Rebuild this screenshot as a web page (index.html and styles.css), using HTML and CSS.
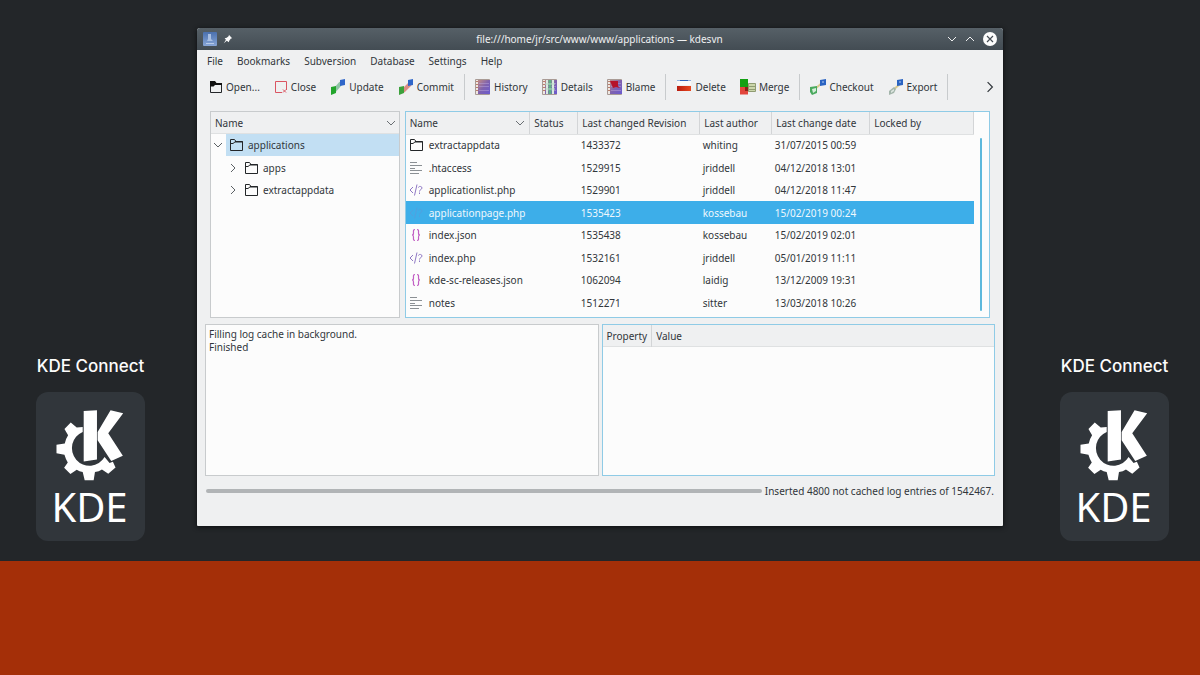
FILE: index.html
```html
<!DOCTYPE html>
<html lang="en">
<head>
<meta charset="utf-8">
<title>kdesvn</title>
<link rel="stylesheet" href="styles.css">
</head>
<body>
<svg class="sprite" aria-hidden="true">
  <defs>
    <linearGradient id="g-log" x1="0" y1="0" x2="1" y2="1"><stop offset="0" stop-color="#c08a86"/><stop offset=".5" stop-color="#7f62ae"/><stop offset="1" stop-color="#6a5ad0"/></linearGradient>
    <linearGradient id="g-red" x1="0" y1="0" x2="1" y2="0"><stop offset="0" stop-color="#b81c10"/><stop offset="1" stop-color="#e8481e"/></linearGradient>
    <linearGradient id="g-app" x1="0" y1="0" x2="0" y2="1"><stop offset="0" stop-color="#4a70ae"/><stop offset="1" stop-color="#88a6d6"/></linearGradient>
  </defs>
  <symbol id="folder" viewBox="0 0 14 14"><path d="M1.500 12.500v-11h4l1.500 2h6.500v9z" fill="none" stroke="#232629"/><path d="M1.500 5.500H4L6.500 3.500" fill="none" stroke="#232629"/><path d="M6 3h7.500v1.500H6z" fill="#232629"/></symbol>
  <symbol id="folder-open" viewBox="0 0 14 14"><path d="M1.500 12.500v-11h4l1.500 2h5.500v9z" fill="none" stroke="#232629"/><path d="M1 1h5l1.500 2H13v2H6L4.500 6.500H1z" fill="#111"/></symbol>
  <symbol id="text" viewBox="0 0 14 14"><path d="M1 1.500h7M1 4.500h12M1 7.500h5M1 9.500h12M1 12.500h9" stroke="#8b9094" fill="none"/></symbol>
  <symbol id="php" viewBox="0 0 14 14"><path d="M4 4L1 7l3 3M8 1.500L5.500 12.500M9.500 4.500c0-1.500 3.500-1.500 3.500.5 0 1.500-2.500 1.500-2.500 3.500M10.500 9.500v1.500" fill="none" stroke="#8f78c4"/></symbol>
  <symbol id="json" viewBox="0 0 14 14"><path d="M6 1.500C4 1.500 4.500 3 4.500 5S4 7 3 7c1 0 1.500 0 1.500 2S4 12.500 6 12.500M8 1.500c2 0 1.500 1.500 1.500 3.500S10 7 11 7c-1 0-1.500 0-1.500 2s.5 3.500-1.500 3.500" fill="none" stroke="#c25fc4" stroke-width="1.200"/></symbol>
  <symbol id="down" viewBox="0 0 10 10"><path d="M1 3l4 4 4-4" fill="none" stroke="currentColor"/></symbol>
  <symbol id="right" viewBox="0 0 10 10"><path d="M3 1l4 4-4 4" fill="none" stroke="currentColor"/></symbol>
  <symbol id="log" viewBox="0 0 16 16"><path d="M.5.500h14v15H.5z" fill="#eee7e2" stroke="#a99b95"/><path d="M3 1h12v14H3z" fill="url(#g-log)"/><path d="M1 2.500h2M1 5.500h2M1 8.500h2M1 11.500h2" stroke="#bb7e6c"/><path d="M4 4.500h10M4 7.500h10M4 11.500h10" stroke="#b9a4db" stroke-opacity=".5"/></symbol>
  <symbol id="kde" viewBox="104 196 204 214"><path d="M187 199l40-2v148l-40 6zM229 262l39-65 38 9-45 60 44 68-35 16-41-63zM184 247L166 249 148 234 129 253 140 272Q132 284 130 297L105 301V326L129 331Q133 345 139 354L128 370 147 389 166 376Q174 381 184 383L190 408H217L221 383Q233 381 242 375L261 388 283 369 275 352 265 356 250 338A53 53 0 1 1 184 262z" fill="#fff"/></symbol>
</svg>

<main class="stage">
  <aside class="side">
    <h2 class="side-title">KDE Connect</h2>
    <div class="card"><svg class="kde-logo" aria-hidden="true"><use href="#kde"/></svg><span class="kde-name">KDE</span></div>
  </aside>

  <section class="window">
    <header class="titlebar">
      <div class="title-side">
        <svg class="i16" viewBox="0 0 16 16"><rect x="1" y="1" width="14" height="14" rx="1" fill="url(#g-app)"/><path d="M6 3h3v5l2 2H5l1-2z" fill="#a9bfe2"/><path d="M4 12.500h8" stroke="#b9cbe8"/></svg>
        <svg class="i10" viewBox="0 0 12 12"><path d="M7 1l4 4-1.500.5L7.500 8 7 10 4.500 8 1 11 3.500 7 2 5l2.500-.5L7 2.500z" fill="#fcfcfc"/></svg>
      </div>
      <h1 class="title">file:///home/jr/src/www/www/applications — kdesvn</h1>
      <div class="title-side title-buttons">
        <button class="plain" aria-label="Minimize"><svg class="i10"><use href="#down"/></svg></button>
        <button class="plain" aria-label="Maximize"><svg class="i10 flip"><use href="#down"/></svg></button>
        <button class="plain" aria-label="Close window"><svg class="i14" viewBox="0 0 14 14"><circle cx="7" cy="7" r="7" fill="#fcfcfc"/><path d="M4 4l6 6M10 4l-6 6" stroke="#454d54" stroke-width="1.200"/></svg></button>
      </div>
    </header>

    <nav class="menubar">
      <button class="plain">File</button><button class="plain">Bookmarks</button><button class="plain">Subversion</button><button class="plain">Database</button><button class="plain">Settings</button><button class="plain">Help</button>
    </nav>

    <div class="toolbar">
      <div class="group">
        <button class="tool"><svg class="i14"><use href="#folder-open"/></svg>Open...</button>
        <button class="tool"><svg class="i14" viewBox="0 0 14 14"><path d="M8 12.500H1.500v-11h11V9M12.500 9v1" fill="none" stroke="#da5562"/><path d="M9 9.500l3 3M12 9.500l-3 3" stroke="#da5562"/></svg>Close</button>
        <button class="tool"><svg class="i16" viewBox="0 0 16 16"><path d="M4 12l7-8" stroke="#8fc4a5" stroke-width="4"/><path d="M1 8l5-1v7l-5 2z" fill="#22a52c"/><path d="M10 1l5-1v6l-5 1z" fill="#2f66c9"/></svg>Update</button>
        <button class="tool"><svg class="i16" viewBox="0 0 16 16"><path d="M5 12l7-7" stroke="#dc8d86" stroke-width="4"/><path d="M1 8l5-1v7l-5 2z" fill="#3da13c"/><path d="M10 1l5-1v6l-5 1z" fill="#2f66c9"/></svg>Commit</button>
      </div>
      <div class="group">
        <button class="tool"><svg class="i16"><use href="#log"/></svg>History</button>
        <button class="tool"><svg class="i16" viewBox="0 0 16 16"><use href="#log"/><path d="M5 1v14M11 1v14" stroke="#d9e9df" stroke-width="2"/><path d="M8 1v14" stroke="#5fae85" stroke-width="3"/><path d="M3 5h10M3 10h10" stroke="#b4ddc4"/></svg>Details</button>
        <button class="tool"><svg class="i16" viewBox="0 0 16 16"><use href="#log"/><path d="M3 2h8v5l2 2-4-1-3 1z" fill="#b5122a"/></svg>Blame</button>
      </div>
      <div class="group">
        <button class="tool"><svg class="i16" viewBox="0 0 16 16"><path d="M1 1h14v5H1z" fill="#fafafa"/><path d="M1 1h14v1H1z" fill="#8fb0de"/><path d="M4 1h8v1H4z" fill="#2f62b8"/><path d="M1 7h14v5H1z" fill="url(#g-red)"/></svg>Delete</button>
        <button class="tool"><svg class="i16" viewBox="0 0 16 16"><path d="M0 0h8v8H0z" fill="#12a012"/><path d="M0 8h8v7.500H0z" fill="#e2453c"/><path d="M5 8h3v4H5z" fill="#8b2118"/><path d="M8.500 4.500h7v8h-7z" fill="#cbd6ab" stroke="#8f9b72"/><path d="M9 7.500h6M9 10.500h6" stroke="#8f9b72"/></svg>Merge</button>
      </div>
      <div class="group">
        <button class="tool"><svg class="i16" viewBox="0 0 16 16"><path d="M6 9l6-5" stroke="#d9c98e" stroke-width="2"/><path d="M0 8l7-1v7l-5 2-2-3z" fill="#49a95e"/><path d="M2 10l4-1v3l-3 2z" fill="#d5ecd9"/><path d="M10 1l6-1v6l-6 1z" fill="#2963c2"/><path d="M12 3h2" stroke="#b6cdf0"/></svg>Checkout</button>
        <button class="tool"><svg class="i16" viewBox="0 0 16 16"><path d="M5 11l7-6" stroke="#d9c98e" stroke-width="2"/><path d="M1 12l5-4 2 2-2 4-5 2z" fill="#a3b5ab"/><path d="M3 12l3-2v2l-3 2z" fill="#dce5df"/><path d="M9 1l6-1v6l-6 1z" fill="#2963c2"/><path d="M11 3h2" stroke="#b6cdf0"/></svg>Export</button>
      </div>
      <button class="plain more" aria-label="More actions"><svg class="i12"><use href="#right"/></svg></button>
    </div>

    <div class="panes">
      <div class="pane">
        <div class="head tree-head">Name<svg class="i10 soft"><use href="#down"/></svg></div>
        <ul class="tree">
          <li class="node"><span class="twist"><svg class="i10"><use href="#down"/></svg></span><span class="node-body current"><svg class="i14"><use href="#folder"/></svg>applications</span></li>
          <li class="node child"><span class="twist"><svg class="i10"><use href="#right"/></svg></span><span class="node-body"><svg class="i14"><use href="#folder"/></svg>apps</span></li>
          <li class="node child"><span class="twist"><svg class="i10"><use href="#right"/></svg></span><span class="node-body"><svg class="i14"><use href="#folder"/></svg>extractappdata</span></li>
        </ul>
      </div>
      <div class="pane active files-pane">
        <table class="files">
          <colgroup><col class="c-name"><col class="c-status"><col class="c-rev"><col class="c-author"><col class="c-date"><col></colgroup>
          <thead><tr><th><span class="sort">Name<svg class="i10 soft"><use href="#down"/></svg></span></th><th>Status</th><th>Last changed Revision</th><th>Last author</th><th>Last change date</th><th>Locked by</th></tr></thead>
          <tbody>
            <tr><td><span class="file"><svg class="i14"><use href="#folder"/></svg>extractappdata</span></td><td></td><td>1433372</td><td>whiting</td><td>31/07/2015 00:59</td><td></td></tr>
            <tr><td><span class="file"><svg class="i14"><use href="#text"/></svg>.htaccess</span></td><td></td><td>1529915</td><td>jriddell</td><td>04/12/2018 13:01</td><td></td></tr>
            <tr><td><span class="file"><svg class="i14"><use href="#php"/></svg>applicationlist.php</span></td><td></td><td>1529901</td><td>jriddell</td><td>04/12/2018 11:47</td><td></td></tr>
            <tr class="selected"><td><span class="file"><svg class="i14 faint"><use href="#php"/></svg>applicationpage.php</span></td><td></td><td>1535423</td><td>kossebau</td><td>15/02/2019 00:24</td><td></td></tr>
            <tr><td><span class="file"><svg class="i14"><use href="#json"/></svg>index.json</span></td><td></td><td>1535438</td><td>kossebau</td><td>15/02/2019 02:01</td><td></td></tr>
            <tr><td><span class="file"><svg class="i14"><use href="#php"/></svg>index.php</span></td><td></td><td>1532161</td><td>jriddell</td><td>05/01/2019 11:11</td><td></td></tr>
            <tr><td><span class="file"><svg class="i14"><use href="#json"/></svg>kde-sc-releases.json</span></td><td></td><td>1062094</td><td>laidig</td><td>13/12/2009 19:31</td><td></td></tr>
            <tr><td><span class="file"><svg class="i14"><use href="#text"/></svg>notes</span></td><td></td><td>1512271</td><td>sitter</td><td>13/03/2018 10:26</td><td></td></tr>
          </tbody>
        </table>
        <div class="scroll"><div class="thumb"></div></div>
      </div>
    </div>

    <div class="lower">
      <div class="pane log">Filling log cache in background.<br>Finished</div>
      <div class="pane active">
        <div class="head props"><span class="prop">Property</span><span class="prop">Value</span></div>
      </div>
    </div>

    <footer class="status">
      <div class="bar" role="progressbar" aria-label="Log cache progress"></div>
      <span>Inserted 4800 not cached log entries of 1542467.</span>
    </footer>
  </section>

  <aside class="side">
    <h2 class="side-title">KDE Connect</h2>
    <div class="card"><svg class="kde-logo" aria-hidden="true"><use href="#kde"/></svg><span class="kde-name">KDE</span></div>
  </aside>
</main>
<div class="band"></div>
</body>
</html>
```
FILE: styles.css
```css
* { box-sizing: border-box; }

body {
  margin: 0;
  min-height: 100vh;
  display: flex;
  flex-direction: column;
  background: #232629;
  color: #31363b;
  font: 10px/14px "Noto Sans", sans-serif;
}

svg { display: block; flex: none; }
.sprite { position: absolute; width: 0; height: 0; }
.i10 { width: 10px; height: 10px; }
.i12 { width: 12px; height: 12px; }
.i14 { width: 14px; height: 14px; }
.i16 { width: 16px; height: 16px; }
.flip { transform: rotate(180deg); }
.faint { opacity: .25; }
.soft { color: #6a6f73; }

button {
  border: 0;
  padding: 0;
  background: none;
  color: inherit;
  font: inherit;
}

.stage {
  display: flex;
  align-items: flex-end;
  padding: 28px 31px 20px 36px;
}

.band { flex: 1; min-height: 64px; background: #a42f08; }

/* Side cards */
.side { flex: none; width: 109px; }
.side-title {
  margin: 0 0 16px;
  color: #fcfcfc;
  font: 500 17px/20px Inter, sans-serif;
  white-space: nowrap;
  text-align: center;
}
.card {
  display: flex;
  flex-direction: column;
  align-items: center;
  padding: 18px 2px 12px 0;
  border-radius: 12px;
  background: #31363b;
}
.kde-logo { width: 68px; height: 71px; }
.kde-name {
  margin-top: 3px;
  color: #fff;
  font-size: 40px;
  line-height: 45px;
}

/* Window */
.window {
  flex: 1;
  min-width: 0;
  margin: 0 57px 15px 52px;
  padding-bottom: 28px;
  border-radius: 3px 3px 1px 1px;
  background: #eff0f1;
  box-shadow: 0 1px 5px #0b0d0f;
}
.titlebar {
  display: flex;
  align-items: center;
  height: 22px;
  padding: 0 6px 0 5px;
  border-radius: 3px 3px 0 0;
  background: linear-gradient(#566067, #434c53);
  color: #eff0f1;
}
.title-side { display: flex; flex: 1; align-items: center; gap: 5px; }
.title-buttons { justify-content: flex-end; gap: 8px; }
.title { margin: 0; font: inherit; }

.menubar { display: flex; gap: 14px; padding: 4px 10px 5px; }

.toolbar { display: flex; align-items: center; height: 28px; padding-left: 12px; }
.group {
  display: flex;
  align-items: center;
  gap: 14px;
  height: 26px;
  margin-right: 10px;
  padding-right: 10px;
  border-right: 1px solid #c8cbcd;
}
.tool { display: flex; align-items: center; gap: 3px; white-space: nowrap; }
.more { margin-left: auto; padding-right: 7px; }

.panes {
  display: grid;
  grid-template-columns: 190fr 586fr;
  gap: 5px;
  padding: 10px 13px 6px;
}
.lower {
  display: grid;
  grid-template-columns: 1fr 1fr;
  gap: 3px;
  min-height: 152px;
  padding: 0 8px;
}
.pane { border: 1px solid #c8cbcd; background: #fcfcfc; }
.active { border-color: #8fcbe6; }
.head {
  display: flex;
  align-items: center;
  height: 22px;
  border-bottom: 1px solid #dfe1e2;
  background: #eff0f1;
}
.tree-head { justify-content: space-between; padding: 0 3px 0 4px; }

.tree { margin: 0; padding: 0; list-style: none; }
.node { display: flex; height: 22px; }
.node:nth-child(even) { height: 23px; }
.child { padding-left: 15px; }
.twist { display: flex; align-items: center; width: 15px; padding-left: 2px; color: #5c6165; }
.node-body { display: flex; flex: 1; align-items: center; gap: 5px; padding-left: 3px; }
.current { background: #c2dff3; }

.files-pane { display: flex; padding-bottom: 3px; }
.files { flex: 1; border-collapse: collapse; table-layout: fixed; }
.c-name { width: 124px; }
.c-status { width: 48px; }
.c-rev { width: 122px; }
.c-author { width: 72px; }
.c-date { width: 98px; }
.files th {
  height: 22px;
  padding: 0 4px;
  border-right: 1px solid #d3d5d7;
  border-bottom: 1px solid #dfe1e2;
  background: #eff0f1;
  font-weight: 400;
  text-align: left;
  white-space: nowrap;
}
.files td { height: 22px; padding: 0 3px; white-space: nowrap; }
.files tr:nth-child(even) td { height: 23px; }
.sort { display: flex; align-items: center; justify-content: space-between; }
.file { display: flex; align-items: center; gap: 6px; }
.selected { background: #3daee9; color: #eff8fd; }
.scroll { display: flex; width: 15px; padding: 26px 7px 3px 6px; }
.thumb { flex: 1; border-radius: 1px; background: #5db8dc; }

.log { padding: 3px; line-height: 13px; }
.prop { padding: 4px; }
.prop + .prop { border-left: 1px solid #d3d5d7; }

.status { display: flex; align-items: center; gap: 3px; padding: 8px 9px 0; }
.bar { flex: 1; height: 4px; border-radius: 2px; background: #b1b4b6; }
```
